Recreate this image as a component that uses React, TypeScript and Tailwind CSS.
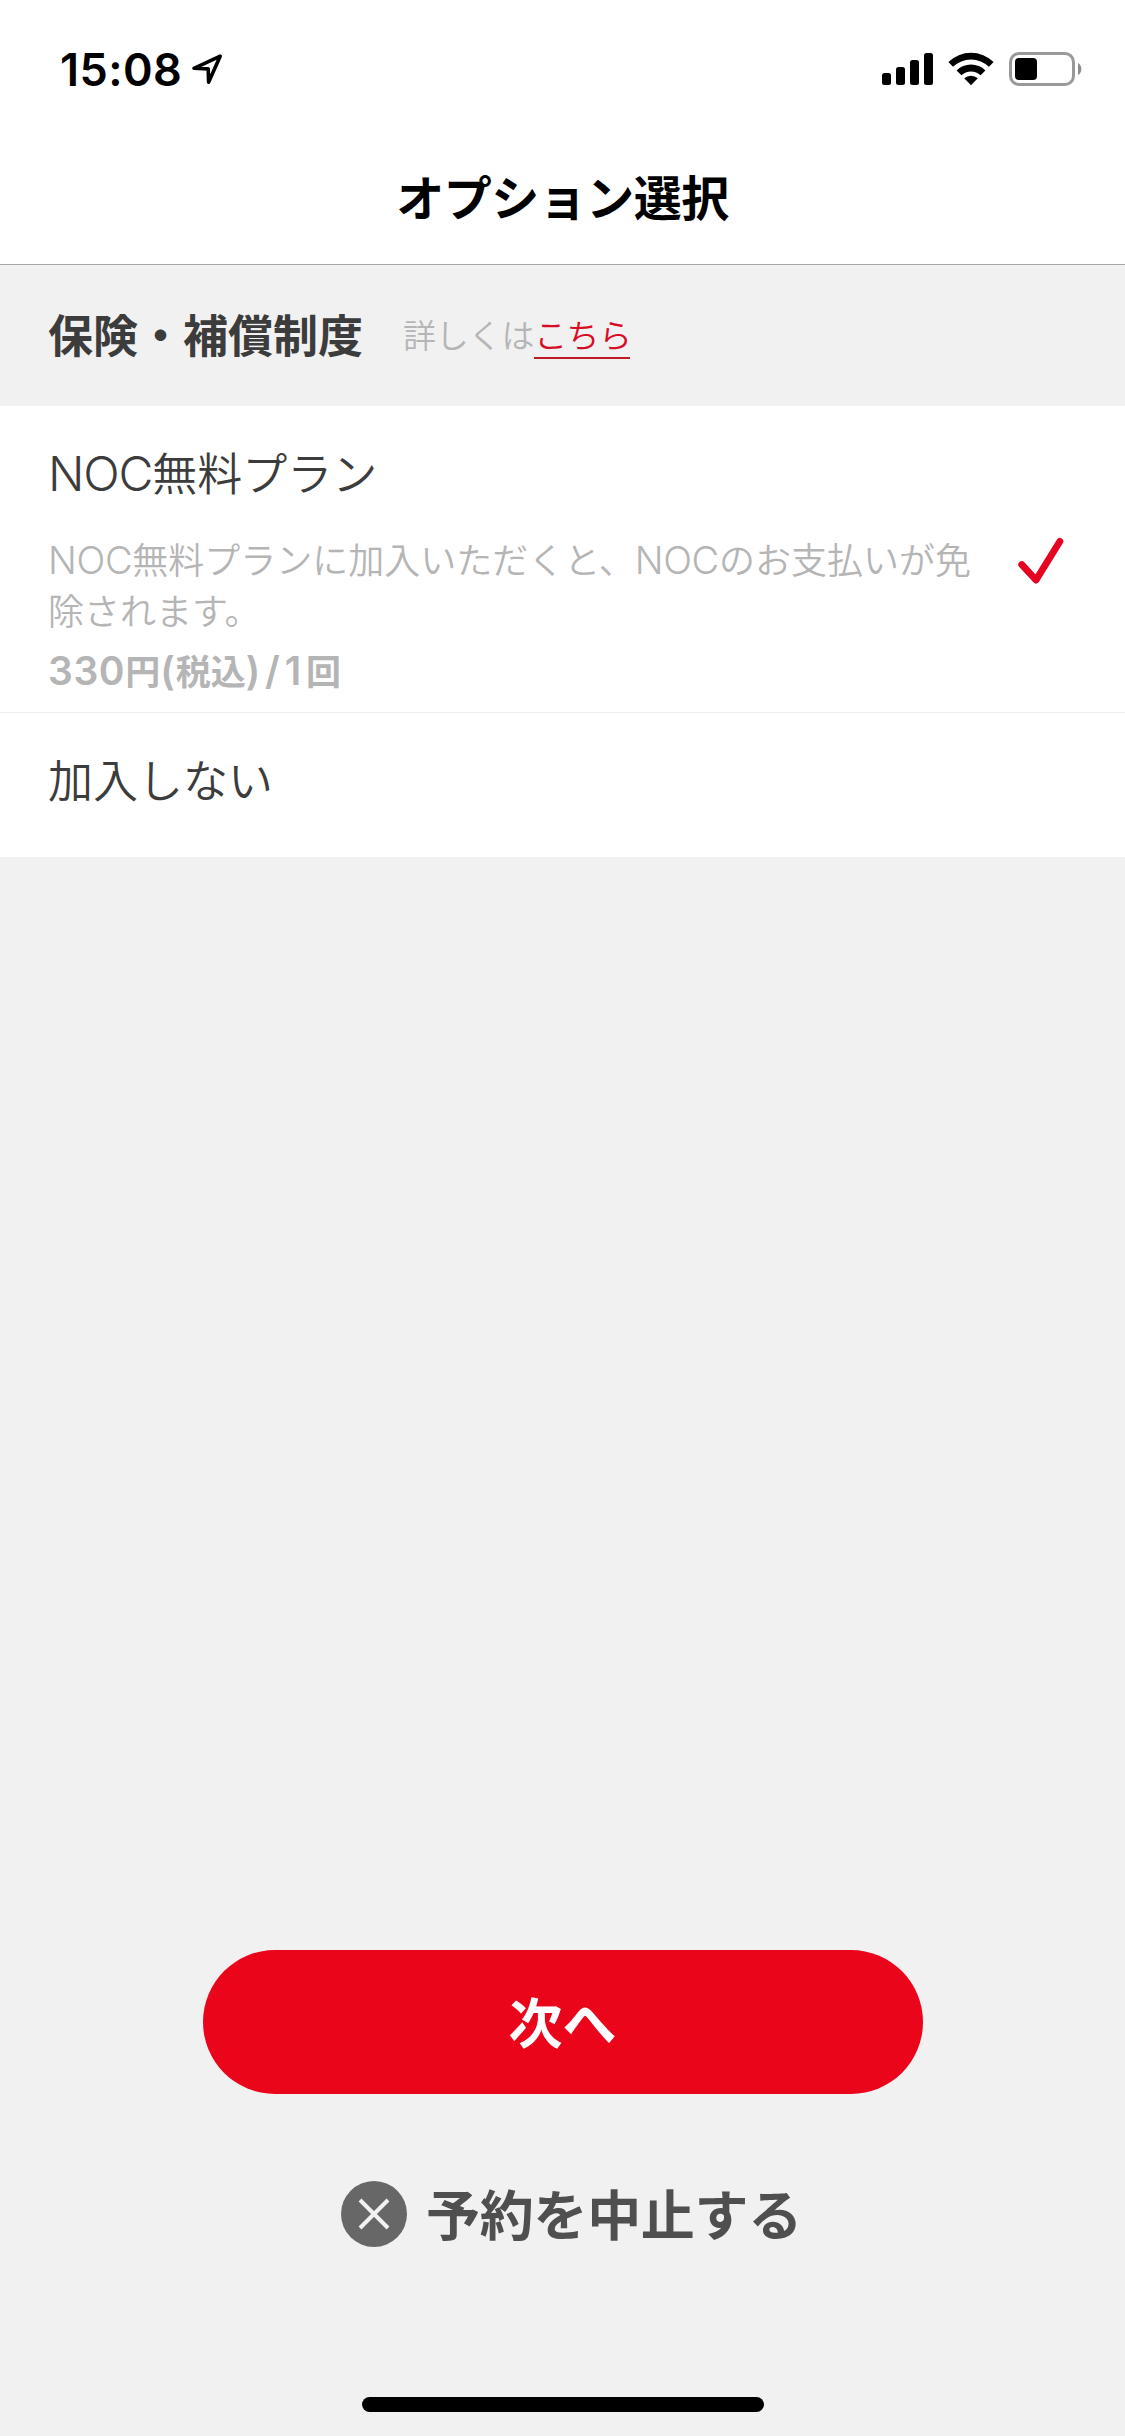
import type { ReactNode } from "react";

const jp = "font-['Noto_Sans_CJK_JP',sans-serif]";

function LocationIcon() {
  return (
    <svg viewBox="0 0 32 32" className="ml-[9px] h-8 w-8" fill="none" stroke="#000" strokeWidth={3.6} strokeLinejoin="round">
      <path d="M29.2 3.2 3 15.3 17.2 15.9 17.6 29.2Z" />
    </svg>
  );
}

function SignalIcon() {
  return (
    <svg viewBox="0 0 51 32" className="h-8 w-[51px]">
      <rect x="0" y="20" width="9" height="12" rx="2.5" />
      <rect x="14" y="14" width="9" height="18" rx="2.5" />
      <rect x="28" y="7" width="9" height="25" rx="2.5" />
      <rect x="42" y="0" width="9" height="32" rx="2.5" />
    </svg>
  );
}

function WifiIcon() {
  return (
    <svg viewBox="0 0 46 34" className="ml-[15px] h-[34px] w-[46px]">
      <path d="M0.4 10A32.5 32.5 0 0 1 45.6 10L41 14.8A25.8 25.8 0 0 0 5 14.8Z" />
      <path d="M8.6 18.4A20.6 20.6 0 0 1 37.4 18.4L32.6 23.2A14 14 0 0 0 13.4 23.2Z" />
      <path d="M16.2 26.3A10 10 0 0 1 29.8 26.3L23 33.2Z" />
    </svg>
  );
}

function BatteryIcon() {
  return (
    <svg viewBox="0 0 74 34" className="ml-[15px] h-[34px] w-[74px]">
      <rect x="1.5" y="1.5" width="63" height="31" rx="8.5" fill="none" stroke="#999" strokeWidth={3} />
      <rect x="6" y="6" width="22" height="22" rx="4" />
      <path d="M69 11A7 7 0 0 1 69 23Z" fill="#8c8c8c" />
    </svg>
  );
}

function StatusBar() {
  return (
    <div className="flex h-[138px] items-center pr-[42px] pl-[60px]">
      <span className="text-[45px] leading-none font-semibold tracking-[0.4px] font-['Inter',sans-serif]">15:08</span>
      <LocationIcon />
      <div className="ml-auto flex items-center">
        <SignalIcon />
        <WifiIcon />
        <BatteryIcon />
      </div>
    </div>
  );
}

function Latin({ className, children }: { className: string; children: ReactNode }) {
  return <span className={`font-['Inter',sans-serif] leading-none ${className}`}>{children}</span>;
}

export default function App() {
  return (
    <div className={`flex h-[2436px] w-[1125px] flex-col bg-[#f1f1f1] text-black ${jp}`} lang="ja">
      <header className="h-[265px] border-b border-[#a6a6a6] bg-white">
        <StatusBar />
        <h1 className="pt-[22px] text-center text-[48px] leading-[70px] font-bold tracking-[-0.5px]">オプション選択</h1>
      </header>

      <section className="flex h-[141px] items-start pt-[36px] pl-12">
        <h2 className="text-[45px] leading-[66px] font-bold text-[#3c3c3c]">保険・補償制度</h2>
        <p className="ml-10 flex pt-[9px] text-[33px] leading-[48px] font-[350] tracking-[-0.2px] text-[#b5b5b5]">
          詳しくは
          <a href="#" className="h-[49px] w-24 border-b-2 border-[#c01a28] whitespace-nowrap tracking-[-0.6px] text-[#d80c24]">
            こちら
          </a>
        </p>
      </section>

      <ul className="bg-white">
        <li className="flex h-[307px] border-b border-[#efefef] px-12 pt-[33px]">
          <div className="w-[930px]">
            <p className="text-[45px] leading-[66px] font-[350] text-[#3c3c3c]">
              <Latin className="text-[48px] font-light tracking-[-1.2px]">NOC</Latin>無料プラン
            </p>
            <p className="mt-[28px] text-[36px] leading-[51px] font-[350] whitespace-nowrap text-[#b5b5b5]">
              <Latin className="text-[38px] font-light tracking-[-0.4px]">NOC</Latin>無料プランに加入いただくと、
              <Latin className="text-[38px] font-light tracking-[-0.4px]">NOC</Latin>のお支払いが免
              <br />
              除されます。
            </p>
            <p className="mt-[9px] text-[35px] leading-[51px] font-bold whitespace-nowrap text-[#b5b5b5]">
              <Latin className="text-[39px] font-semibold tracking-[0.6px]">330</Latin>円
              <Latin className="text-[39px] font-semibold tracking-[1px]">(</Latin>税込
              <Latin className="text-[39px] font-semibold tracking-[4.8px]">)/1</Latin>回
            </p>
          </div>
          <svg viewBox="0 0 48 48" className="mt-[97px] ml-[38px] h-12 w-12" fill="none" stroke="#e60520" strokeWidth={7} strokeLinecap="round" strokeLinejoin="round">
            <path d="M5.8 28.6 20 44 43.8 5.5" />
          </svg>
        </li>
        <li className="h-[144px] px-12 pt-[33px]">
          <p className="text-[45px] leading-[66px] font-[350] text-[#3c3c3c]">加入しない</p>
        </li>
      </ul>

      <footer className="mt-auto flex flex-col items-center pb-6">
        <button className="h-36 w-[720px] rounded-full bg-[#eb051b] pb-[3px] text-[54px] leading-none font-bold text-white">
          次へ
        </button>
        <button className="mt-[80px] flex h-20 items-center gap-[19px] pl-[18px] text-[54px] leading-none font-bold tracking-[-0.3px] text-[#4f4f4f]">
          <svg viewBox="0 0 66 66" className="h-[66px] w-[66px]">
            <circle cx="33" cy="33" r="33" fill="#676767" />
            <path d="M19 19 47 47M47 19 19 47" stroke="#f1f1f1" strokeWidth={4} />
          </svg>
          <span className="pb-[2px]">予約を中止する</span>
        </button>
        <div className="mt-[143px] h-[15px] w-[402px] rounded-full bg-black" />
      </footer>
    </div>
  );
}
